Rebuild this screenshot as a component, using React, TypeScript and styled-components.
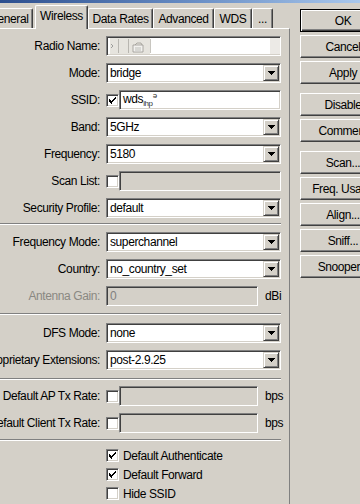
import React from "react";
import styled, { createGlobalStyle, css } from "styled-components";

const FONT = `"Liberation Sans", Arial, sans-serif`;

const Global = createGlobalStyle`
  html, body { margin: 0; padding: 0; background: #d4d0c8; overflow: hidden; }
  body { font-family: ${FONT}; font-size: 12px; letter-spacing: -0.4px; color: #000; }
`;

const Screen = styled.div`
  width: 360px;
  height: 504px;
  overflow: hidden;
  background: #d4d0c8;
  display: flex;
  flex-direction: column;
`;

const TitleStrip = styled.div`
  flex: none;
  height: 3px;
  background: linear-gradient(to right, #2d4f8e 0%, #6a8fc6 55%, #aac8ec 100%);
`;

const Body = styled.div`
  flex: 1;
  min-height: 0;
  display: flex;
`;

const LeftPart = styled.div`
  flex: none;
  width: 306px;
  margin-left: -16px;
  display: flex;
  flex-direction: column;
`;

const TabStrip = styled.div`
  flex: none;
  height: 25px;
  display: flex;
  align-items: flex-end;
  position: relative;
  z-index: 1;
`;

const Tab = styled.div<{ $w: number; $active?: boolean }>`
  box-sizing: border-box;
  flex: none;
  width: ${(p) => p.$w}px;
  height: ${(p) => (p.$active ? 24 : 20)}px;
  margin-left: ${(p) => (p.$active ? 2 : 0)}px;
  margin-bottom: ${(p) => (p.$active ? -1 : 0)}px;
  padding-top: ${(p) => (p.$active ? 3 : 3)}px;
  background: #d4d0c8;
  border-top: 1px solid #fff;
  border-left: 1px solid #fff;
  border-right: 1px solid #404040;
  box-shadow: inset -1px 0 #808080;
  border-top-left-radius: 2px;
  border-top-right-radius: 2px;
  text-align: center;
  white-space: nowrap;
  font-size: 12px;
  line-height: 14px;
`;

const Panel = styled.div`
  flex: 1;
  border-top: 1px solid #fff;
  border-left: 1px solid #fff;
  border-right: 1px solid #808080;
  padding-top: 7px;
`;

const Section = styled.div`
  display: grid;
  grid-template-columns: 115px 175px;
  column-gap: 6px;
  row-gap: 7px;
  grid-auto-rows: 20px;
`;

const CheckSection = styled.div`
  display: grid;
  grid-template-columns: 115px 175px;
  column-gap: 6px;
  grid-auto-rows: 19px;
`;

const Separator = styled.div<{ $mt: number; $mb: number }>`
  height: 0;
  margin: ${(p) => p.$mt}px 8px ${(p) => p.$mb}px 0;
  border-top: 1px solid #808080;
  border-bottom: 1px solid #fff;
`;

const Label = styled.div<{ $disabled?: boolean }>`
  display: flex;
  justify-content: flex-end;
  align-items: center;
  white-space: nowrap;
  font-size: 12px;
  color: ${(p) => (p.$disabled ? "#8a8882" : "#000")};
`;

const Control = styled.div`
  display: flex;
  align-items: center;
  min-width: 0;
`;

const Field = styled.div<{ $disabled?: boolean }>`
  box-sizing: border-box;
  flex: 1;
  min-width: 0;
  height: 20px;
  display: flex;
  align-items: center;
  padding: 0 0 0 3px;
  border: 1px solid;
  border-color: #808080 #fff #fff #808080;
  box-shadow: inset 1px 1px #404040, inset -1px -1px #d4d0c8;
  background: ${(p) => (p.$disabled ? "#d4d0c8" : "#fff")};
  color: ${(p) => (p.$disabled ? "#808080" : "#000")};
  font-size: 12px;
  line-height: 14px;
  white-space: nowrap;
  overflow: hidden;
`;

const FieldText = styled.span`
  flex: 1;
`;

const DropButton = styled.div`
  box-sizing: border-box;
  flex: none;
  width: 16px;
  height: 16px;
  margin-right: 1px;
  display: flex;
  align-items: center;
  justify-content: center;
  background: #d4d0c8;
  border: 1px solid;
  border-color: #d4d0c8 #404040 #404040 #d4d0c8;
  box-shadow: inset 1px 1px #fff, inset -1px -1px #808080;
`;

const Unit = styled.div`
  flex: none;
  width: 23px;
  padding-left: 7px;
  box-sizing: border-box;
  white-space: nowrap;
  overflow: visible;
  font-size: 12px;
`;

const Box = styled.div`
  box-sizing: border-box;
  flex: none;
  width: 13px;
  height: 13px;
  display: flex;
  align-items: center;
  justify-content: center;
  background: #fff;
  border: 1px solid;
  border-color: #808080 #fff #fff #808080;
  box-shadow: inset 1px 1px #404040, inset -1px -1px #d4d0c8;
`;

const CheckRow = styled.div`
  grid-column: 2;
  display: flex;
  align-items: center;
  gap: 4px;
  white-space: nowrap;
  font-size: 12px;
`;

const Garble = styled.span`
  font-size: 8px;
  vertical-align: sub;
  color: #333;
`;

const GarbleSup = styled.span`
  font-size: 8px;
  vertical-align: super;
  color: #333;
`;

const ButtonColumn = styled.div`
  flex: none;
  width: 86px;
  margin-left: 10px;
  padding-top: 6px;
  display: flex;
  flex-direction: column;
  gap: 3px;
`;

const WinButton = styled.button<{ $default?: boolean; $groupStart?: boolean }>`
  box-sizing: border-box;
  flex: none;
  width: 86px;
  height: 23px;
  margin: ${(p) => (p.$groupStart ? 6 : 0)}px 0 0 0;
  padding: 0;
  font-family: ${FONT};
  font-size: 12px;
  letter-spacing: -0.4px;
  color: #000;
  background: #d4d0c8;
  white-space: nowrap;
  ${(p) =>
    p.$default
      ? css`
          border: 1px solid #000;
          box-shadow: inset 1px 1px #fff, inset -1px -1px #404040, inset -2px -2px #808080;
        `
      : css`
          border: 1px solid;
          border-color: #fff #404040 #404040 #fff;
          box-shadow: inset -1px -1px #808080, inset 1px 1px #d4d0c8;
        `}
`;

const Arrow = () => (
  <svg width="7" height="4" viewBox="0 0 7 4">
    <path d="M0 0h7v1H0zM1 1h5v1H1zM2 2h3v1H2zM3 3h1v1H3z" fill="#000" />
  </svg>
);

const Check = () => (
  <svg width="7" height="7" viewBox="0 0 7 7">
    <path
      d="M6 0h1v1H6zM5 1h2v1H5zM4 2h2v1H4zM0 2h1v1H0zM0 3h2v1H0zM3 3h2v1H3zM1 4h3v1H1zM2 5h1v1H2zM0 4h1v1H0zM1 5h1v1H1zM2 6h1v1H2z"
      fill="#000"
    />
  </svg>
);

const CheckBox = ({ checked }: { checked?: boolean }) => <Box>{checked ? <Check /> : null}</Box>;

const Select = ({ value }: { value: string }) => (
  <Field>
    <FieldText>{value}</FieldText>
    <DropButton>
      <Arrow />
    </DropButton>
  </Field>
);

const RadioNameSmudge = () => (
  <svg width="170" height="16" viewBox="0 0 170 16">
    <rect x="-2" y="0" width="42" height="16" fill="#e6e4de" />
    <path d="M1 6l2 2-2 2" stroke="#8a8a8a" fill="none" strokeWidth="0.8" />
    <line x1="8.5" y1="1" x2="8.5" y2="15" stroke="#b8b6b0" />
    <line x1="18.5" y1="1" x2="18.5" y2="15" stroke="#b8b6b0" />
    <path d="M23 7h10v7H23z" fill="#f2f1ee" stroke="#9a9892" strokeWidth="0.8" />
    <path d="M25 7l2-2h4l1 2" fill="none" stroke="#9a9892" strokeWidth="0.8" />
    <path d="M25 10h6M25 12h6" stroke="#a8a6a0" strokeWidth="0.7" />
    <line x1="40.5" y1="1" x2="40.5" y2="15" stroke="#c8c6c0" />
    <rect x="160" y="0" width="10" height="16" fill="#eceae6" />
  </svg>
);

export default function App() {
  return (
    <>
      <Global />
      <Screen>
        <TitleStrip />
        <Body>
          <LeftPart>
            <TabStrip>
              <Tab $w={49}>General</Tab>
              <Tab $w={53} $active>
                Wireless
              </Tab>
              <Tab $w={65}>Data Rates</Tab>
              <Tab $w={61}>Advanced</Tab>
              <Tab $w={38}>WDS</Tab>
              <Tab $w={21}>...</Tab>
            </TabStrip>
            <Panel>
              <Section>
                <Label>Radio Name:</Label>
                <Control>
                  <Field>
                    <RadioNameSmudge />
                  </Field>
                </Control>

                <Label>Mode:</Label>
                <Control>
                  <Select value="bridge" />
                </Control>

                <Label>SSID:</Label>
                <Control>
                  <CheckBox checked />
                  <Field>
                    <FieldText>
                      wds<Garble>ihp</Garble>
                      <GarbleSup>ə</GarbleSup>
                    </FieldText>
                  </Field>
                </Control>

                <Label>Band:</Label>
                <Control>
                  <Select value="5GHz" />
                </Control>

                <Label>Frequency:</Label>
                <Control>
                  <Select value="5180" />
                </Control>

                <Label>Scan List:</Label>
                <Control>
                  <CheckBox />
                  <Field $disabled />
                </Control>

                <Label>Security Profile:</Label>
                <Control>
                  <Select value="default" />
                </Control>
              </Section>

              <Separator $mt={5} $mb={7} />

              <Section>
                <Label>Frequency Mode:</Label>
                <Control>
                  <Select value="superchannel" />
                </Control>

                <Label>Country:</Label>
                <Control>
                  <Select value="no_country_set" />
                </Control>

                <Label $disabled>Antenna Gain:</Label>
                <Control>
                  <Field $disabled>
                    <FieldText>0</FieldText>
                  </Field>
                  <Unit>dBi</Unit>
                </Control>
              </Section>

              <Separator $mt={7} $mb={8} />

              <Section>
                <Label>DFS Mode:</Label>
                <Control>
                  <Select value="none" />
                </Control>

                <Label>Proprietary Extensions:</Label>
                <Control>
                  <Select value="post-2.9.25" />
                </Control>
              </Section>

              <Separator $mt={8} $mb={6} />

              <Section>
                <Label>Default AP Tx Rate:</Label>
                <Control>
                  <CheckBox />
                  <Field $disabled />
                  <Unit>bps</Unit>
                </Control>

                <Label>Default Client Tx Rate:</Label>
                <Control>
                  <CheckBox />
                  <Field $disabled />
                  <Unit>bps</Unit>
                </Control>
              </Section>

              <Separator $mt={6} $mb={5} />

              <CheckSection>
                <CheckRow>
                  <CheckBox checked />
                  Default Authenticate
                </CheckRow>
                <CheckRow>
                  <CheckBox checked />
                  Default Forward
                </CheckRow>
                <CheckRow>
                  <CheckBox />
                  Hide SSID
                </CheckRow>
              </CheckSection>
            </Panel>
          </LeftPart>

          <ButtonColumn>
            <WinButton $default>OK</WinButton>
            <WinButton>Cancel</WinButton>
            <WinButton>Apply</WinButton>
            <WinButton $groupStart>Disable</WinButton>
            <WinButton>Comment</WinButton>
            <WinButton $groupStart>Scan...</WinButton>
            <WinButton>Freq. Usage</WinButton>
            <WinButton>Align...</WinButton>
            <WinButton>Sniff...</WinButton>
            <WinButton>Snooper...</WinButton>
          </ButtonColumn>
        </Body>
      </Screen>
    </>
  );
}
